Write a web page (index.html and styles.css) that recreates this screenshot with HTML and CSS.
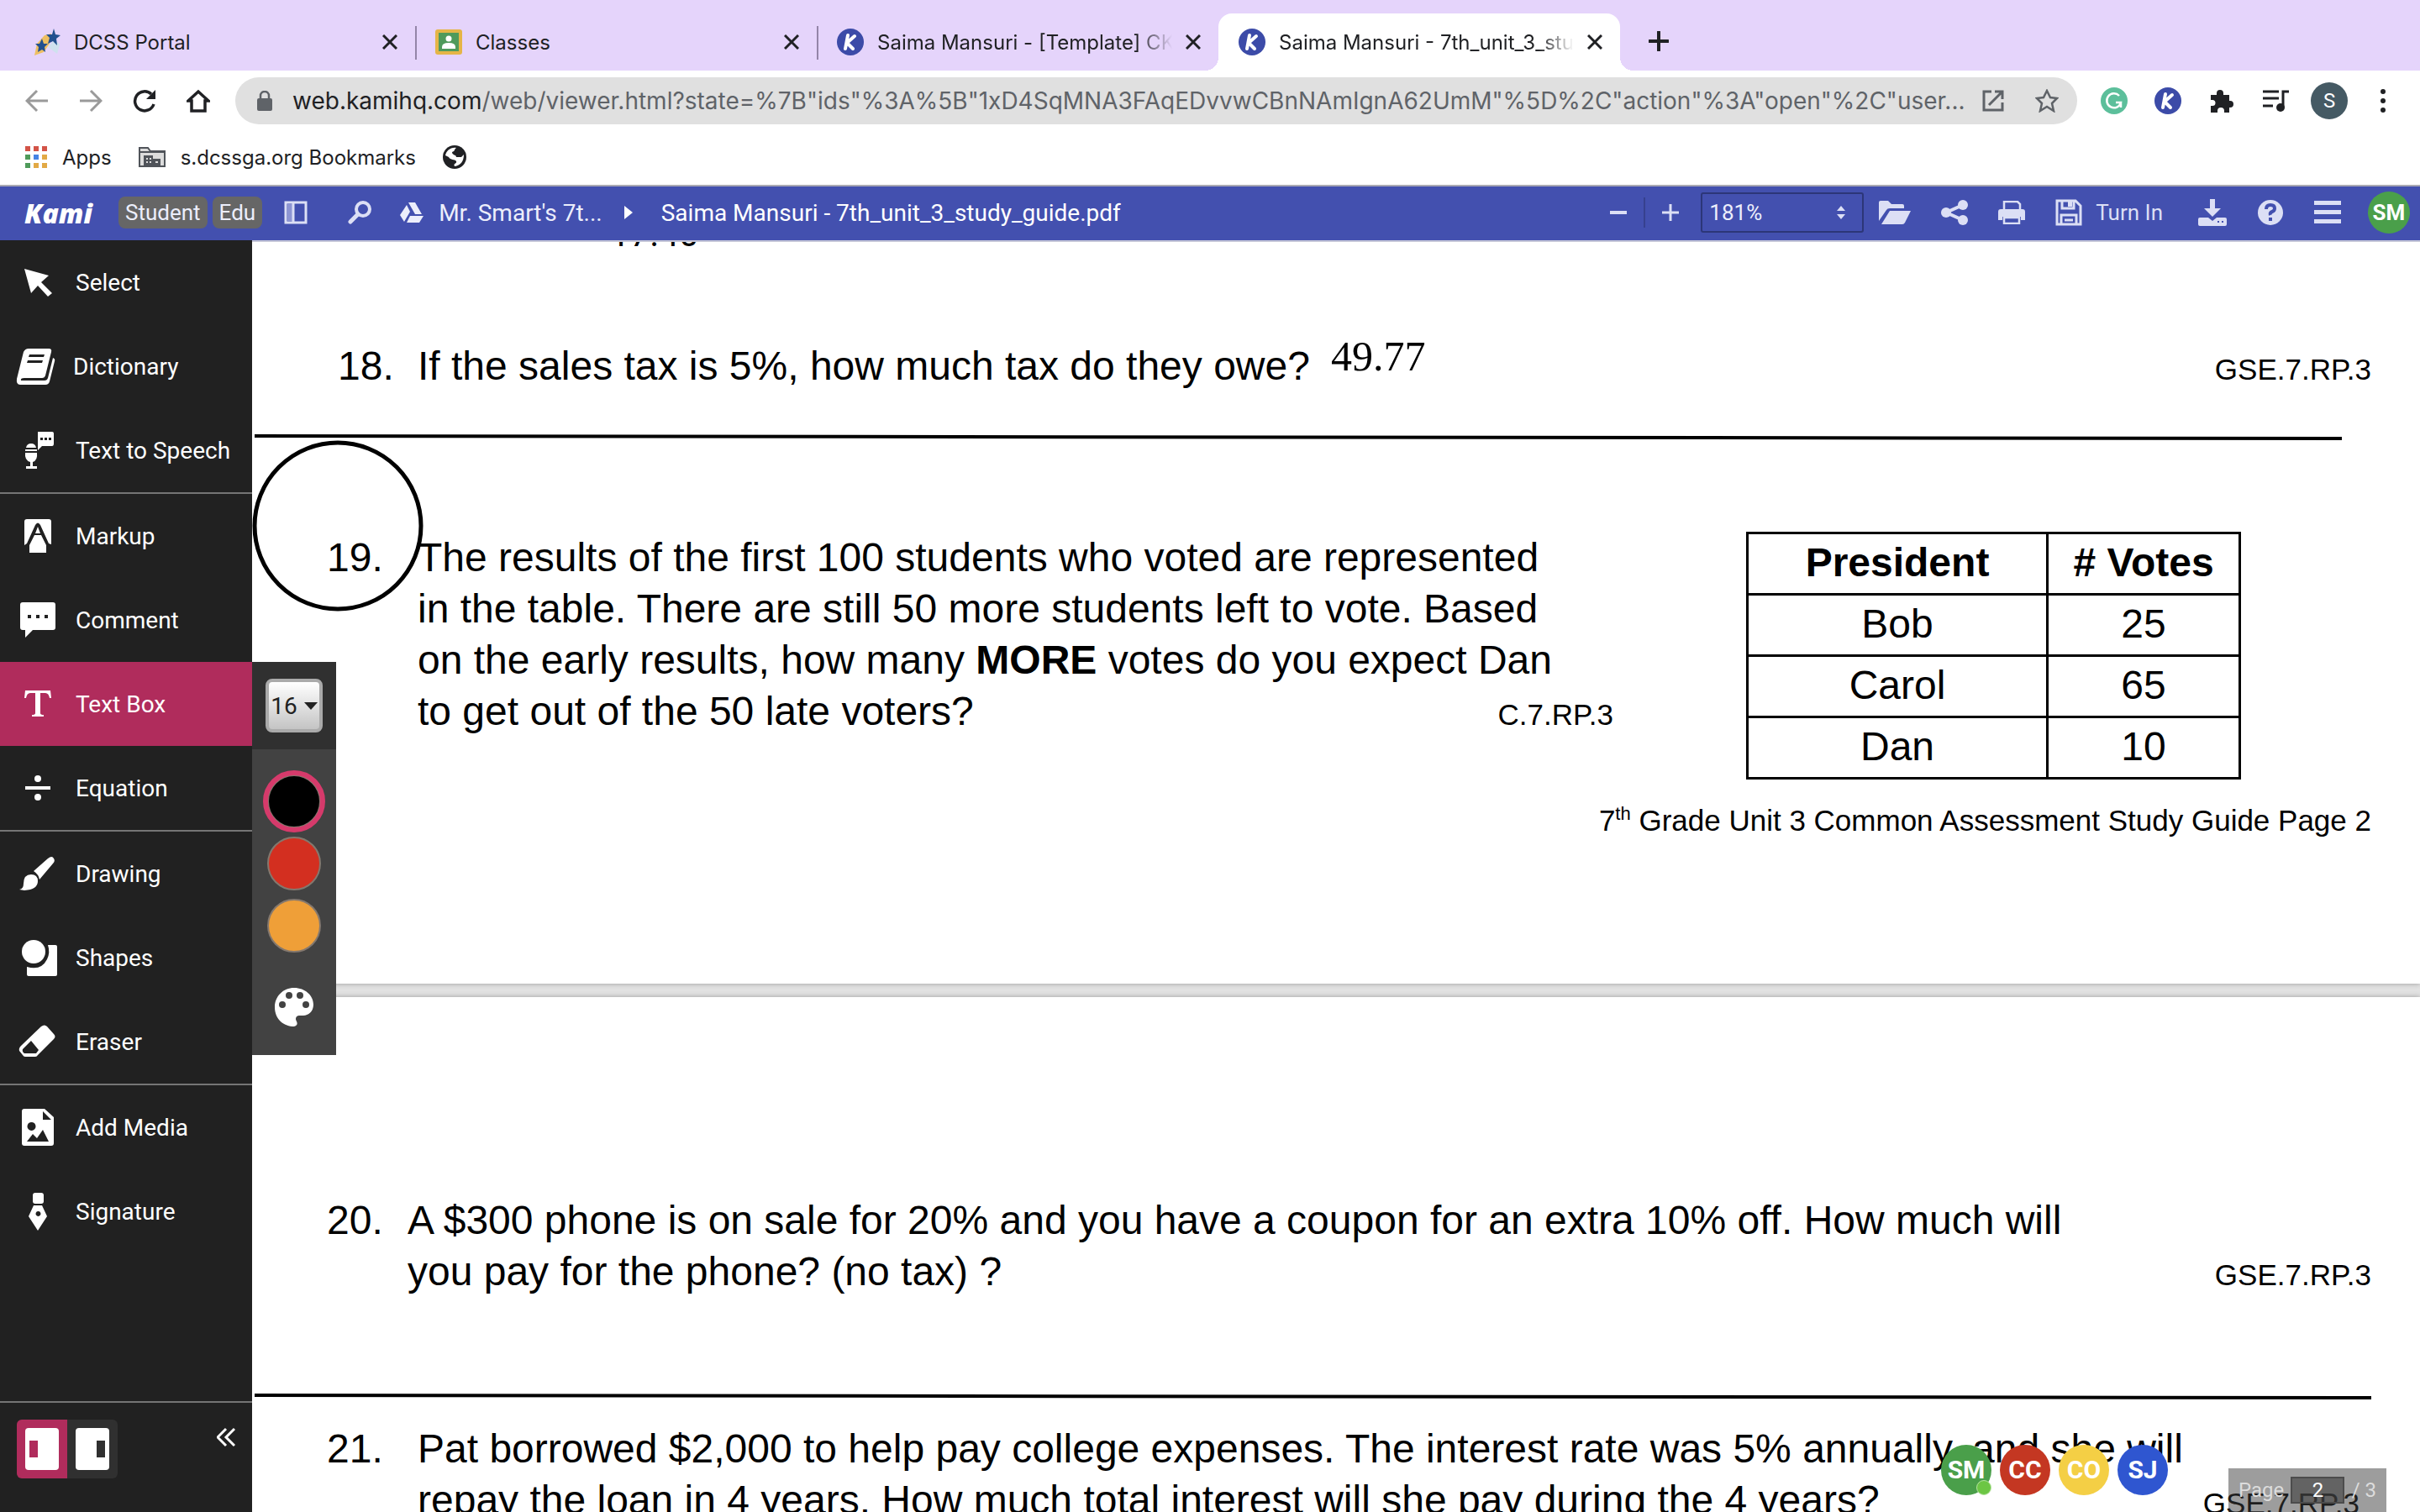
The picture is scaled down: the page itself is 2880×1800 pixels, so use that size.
FILE: index.html
```html
<!DOCTYPE html>
<html lang="en">
<head>
    <meta charset="utf-8">
    <title>Saima Mansuri - 7th_unit_3_study_guide.pdf</title>
    <link rel="stylesheet" href="styles.css">
</head>
<body>
    <!-- icons used more than once -->
    <svg class="defs" width="0" height="0">
        <symbol id="close" viewBox="0 0 18 18"><path d="M1 1l16 16M17 1L1 17" stroke="#202124" stroke-width="3" fill="none"/></symbol>
        <symbol id="kami" viewBox="0 0 32 32"><circle cx="16" cy="16" r="16" fill="#3c4ba8" stroke="none"/><path d="M13 8l-3 16M21 9l-9 8 7 7" stroke="#fff" stroke-width="4" stroke-linecap="round" stroke-linejoin="round" fill="none"/></symbol>
    </svg>

    <div class="tabs">
        <div class="tab">
            <svg class="favicon" viewBox="0 0 32 32"><path d="M1 32l3-14 9-10 8-2-2 12-7 10z" fill="#eebf62"/><path d="M17 22l8-9 6 6-3 11z" fill="#cfe2ee"/><path d="M24 0l2 7 6 1-5 4 1 8-5-5-6 3 2-7-4-4h7zM10 12l2 6 5 0-4 4 1 6-4-3-5 3 1-6-4-4h5z" fill="#22508f"/></svg>
            <span class="tab-title">DCSS Portal</span>
            <button class="close" aria-label="Close"><svg><use href="#close"/></svg></button>
        </div>
        <div class="tab line">
            <svg class="favicon" viewBox="0 0 32 32"><rect y="1" width="32" height="30" rx="3" fill="#e5b547"/><rect x="4" y="5" width="24" height="22" fill="#4f9a5b"/><circle cx="16" cy="12" r="3.500" fill="#fff"/><path d="M8 22q0-5 8-5t8 5v2H8z" fill="#fff"/></svg>
            <span class="tab-title">Classes</span>
            <button class="close" aria-label="Close"><svg><use href="#close"/></svg></button>
        </div>
        <div class="tab line">
            <svg class="favicon"><use href="#kami"/></svg>
            <span class="tab-title fade">Saima Mansuri - [Template] CKLA</span>
            <button class="close" aria-label="Close"><svg><use href="#close"/></svg></button>
        </div>
        <div class="tab active">
            <svg class="favicon"><use href="#kami"/></svg>
            <span class="tab-title fade">Saima Mansuri - 7th_unit_3_study</span>
            <button class="close" aria-label="Close"><svg><use href="#close"/></svg></button>
        </div>
        <button class="new-tab" aria-label="New tab"><svg width="24" height="24" viewBox="0 0 24 24"><path d="M12 1v22M1 12h22" stroke="#202124" stroke-width="4" stroke-linecap="round"/></svg></button>
    </div>

    <div class="toolbar">
        <button aria-label="Back"><svg viewBox="0 0 28 28"><path d="M27 14H3M14 2L2 14l12 12" stroke="#9a9a9a"/></svg></button>
        <button aria-label="Forward"><svg viewBox="0 0 28 28"><path d="M1 14h24M14 2l12 12-12 12" stroke="#9a9a9a"/></svg></button>
        <button aria-label="Reload"><svg viewBox="0 0 28 28"><path d="M25 18A11.500 11.500 0 1 1 22 6" stroke-width="3.500"/><path d="M27 1v11H16z" fill="#202124" stroke="none"/></svg></button>
        <button aria-label="Home"><svg viewBox="0 0 28 28"><path d="M14 3L2 14h4v12h16V14h4z" stroke-width="3.500"/></svg></button>
        <div class="omnibox">
            <svg class="lock" viewBox="0 0 18 24"><rect y="9" width="18" height="15" rx="2" fill="#5f6368"/><path d="M4 10V6a5 5 0 0 1 10 0v4" stroke="#5f6368" stroke-width="2.500" fill="none"/></svg>
            <div class="url"><b>web.kamihq.com</b>/web/viewer.html?state=%7B"ids"%3A%5B"1xD4SqMNA3FAqEDvvwCBnNAmIgnA62UmM"%5D%2C"action"%3A"open"%2C"user...</div>
            <button aria-label="Open in app"><svg viewBox="0 0 28 28"><path d="M12 3H3v22h22v-9M16 3h9v9M25 3L9 19" stroke="#5f6368"/></svg></button>
            <button aria-label="Bookmark"><svg viewBox="0 0 28 28"><path d="M14 2l4 8 8 1-6 6 2 9-8-5-8 5 2-9-6-6 8-1z" stroke="#5f6368" stroke-width="2.500"/></svg></button>
        </div>
        <button aria-label="Grammarly"><svg class="ext" viewBox="0 0 32 32"><circle cx="16" cy="16" r="16" fill="#5cbf9b" stroke="none"/><path d="M22 10a8.500 8.500 0 1 0 2 8h-6M24 18v6" stroke="#fff" stroke-width="2.500"/></svg></button>
        <button aria-label="Kami"><svg class="ext"><use href="#kami"/></svg></button>
        <button aria-label="Extensions"><svg viewBox="0 0 28 28"><path d="M1 7h7V5a4 4 0 0 1 8 0v2h7v7h1a4 4 0 0 1 0 8h-1v6h-6v-2a4 4 0 0 0-8 0v2H1v-8h2a3 3 0 0 0 0-7H1z" fill="#202124" stroke="none"/></svg></button>
        <button aria-label="Media"><svg class="ext" viewBox="0 0 32 28"><path d="M1 3h19M1 11h19M1 20h12M25 22V3h7"/><circle cx="22" cy="22" r="5" fill="#202124" stroke="none"/></svg></button>
        <button class="profile">S</button>
        <button aria-label="Menu"><svg viewBox="0 0 28 28"><g fill="#202124" stroke="none"><circle cx="14" cy="3" r="3"/><circle cx="14" cy="14" r="3"/><circle cx="14" cy="25" r="3"/></g></svg></button>
    </div>

    <div class="bookmarks">
        <a href="#"><svg width="26" height="26" viewBox="0 0 26 26"><g fill="#d35347"><path d="M0 0h6v6H0zM10 0h6v6h-6zM20 0h6v6h-6z"/></g><g fill="#4f9b5a"><path d="M0 10h6v6H0zM0 20h6v6H0z"/></g><path d="M10 10h6v6h-6z" fill="#4584e4"/><path d="M20 10h6v6h-6zM10 20h6v6h-6zM20 20h6v6h-6z" fill="#e2a945"/></svg>Apps</a>
        <a href="#"><svg width="32" height="26" viewBox="0 0 32 26"><path d="M1 24V2h10l3 4h17v18z" fill="#dcdcdc" stroke="#50545a" stroke-width="2"/><path d="M1 7h30" stroke="#50545a" stroke-width="2"/><path d="M6 11h11v4h9v9H6zM9 14v2h2v-2zM13 14v2h2v-2zM9 18v2h2v-2zM13 18v2h2v-2zM20 18v2h3v-2z" fill="#50545a" fill-rule="evenodd"/></svg>s.dcssga.org Bookmarks</a>
        <a href="#" aria-label="Globe"><svg width="28" height="28" viewBox="0 0 28 28"><circle cx="14" cy="14" r="14" fill="#202124"/><path d="M16 3c-3 2-1 4-5 5 0 4 5 3 5 6h6l3-3c0 8-4 13-11 14-2-4 3-3 2-6-2-3-7-1-9-5L3 12C4 7 9 2 16 3z" fill="#fff"/></svg></a>
    </div>

    <div class="kami-bar">
        <a class="logo" href="#">Kami</a>
        <span class="badge">Student</span>
        <span class="badge">Edu</span>
        <button class="panel" aria-label="Panel"><svg width="28" height="28" viewBox="0 0 28 28"><path d="M4 4h6v20H4z" fill="#8d95d3"/><path d="M2 2h24v24H2zM11 2v24" fill="none" stroke="#dcdff5" stroke-width="3"/></svg></button>
        <button class="search" aria-label="Search"><svg width="28" height="28" viewBox="0 0 28 28"><circle cx="18" cy="10" r="8" fill="none" stroke="#dcdff5" stroke-width="4"/><path d="M12 16L3 25" stroke="#dcdff5" stroke-width="5" stroke-linecap="round"/></svg></button>
        <a class="crumb" href="#"><svg width="28" height="26" viewBox="0 0 28 26"><path d="M10 1h8l8 14h-8zM8 4l4 8-7 12-5-8zM12 17h16l-5 8H8z" fill="#eceefb"/></svg>Mr. Smart's 7t...</a>
        <svg class="arrow" width="10" height="16" viewBox="0 0 10 16"><path d="M0 0l10 8-10 8z" fill="#fff"/></svg>
        <span class="file">Saima Mansuri - 7th_unit_3_study_guide.pdf</span>

        <div class="zoom">
            <button aria-label="Zoom out"><svg width="20" height="20" viewBox="0 0 20 20"><path d="M0 10h20" stroke="#dcdff5" stroke-width="4"/></svg></button>
            <i></i>
            <button aria-label="Zoom in"><svg width="20" height="20" viewBox="0 0 20 20"><path d="M0 10h20M10 0v20" stroke="#dcdff5" stroke-width="3"/></svg></button>
            <div class="select">
                <select aria-label="Zoom level"><option>181%</option></select>
                <svg width="10" height="16" viewBox="0 0 10 16"><path d="M0 6l5-6 5 6zM0 10l5 6 5-6z" fill="#dcdff5"/></svg>
            </div>
        </div>
        <div class="actions">
            <button aria-label="Open"><svg width="38" height="28" viewBox="0 0 38 28"><path d="M0 2q0-2 2-2h9l4 4h13q2 0 2 2v3H13q-3 0-4 2L0 24z"/><path d="M13 12h25l-7 14q-1 2-3 2H3z"/></svg></button>
            <button aria-label="Share"><svg width="32" height="30" viewBox="0 0 32 30"><circle cx="26" cy="6" r="6"/><circle cx="6" cy="15" r="6"/><circle cx="26" cy="24" r="6"/><path d="M26 6L6 15l20 9" fill="none" stroke="#dcdff5" stroke-width="4"/></svg></button>
            <button aria-label="Print"><svg width="32" height="28" viewBox="0 0 32 28"><path d="M7 10V1h16l3 3v6M7 20h18v7H7z" fill="none" stroke="#dcdff5" stroke-width="2.500"/><path d="M3 10h26q3 0 3 3v10h-5v-4H5v4H0V13q0-3 3-3z"/></svg></button>
            <button class="turn-in"><svg width="32" height="32" viewBox="0 0 32 32"><path d="M2 2h22l6 6v22H2zM8 2v9h14V2M7 30V19h18v11M11 25h10" fill="none" stroke="#dcdff5" stroke-width="3"/><path d="M15 3h5v6h-5z"/></svg>Turn In</button>
            <button aria-label="Download"><svg width="34" height="32" viewBox="0 0 34 32"><path d="M14 0h6v11h7L17 21 7 11h7z"/><path d="M2 22h10l5 4 5-4h10q2 0 2 2v6q0 2-2 2H2q-2 0-2-2v-6q0-2 2-2z"/><path d="M23 27h2M28 27h2" stroke="#4350af" stroke-width="2"/></svg></button>
            <button aria-label="Help"><svg width="32" height="32" viewBox="0 0 32 32"><circle cx="16" cy="16" r="15"/><path d="M11 12q0-5 5-5t5 4q0 3-3 4t-2 4M16 22v4" fill="none" stroke="#4350af" stroke-width="4"/></svg></button>
            <button aria-label="Menu"><svg width="32" height="28" viewBox="0 0 32 28"><path d="M0 0h32v5H0zM0 11h32v5H0zM0 22h32v5H0z"/></svg></button>
            <button class="me">SM</button>
        </div>
    </div>

    <div class="main">
        <div class="sidebar">
            <button class="tool"><svg viewBox="0 0 44 44"><path d="M6 6l29 8-9 8 13 13-5 4-12-13-8 9z"/></svg>Select</button>
            <button class="tool dictionary"><svg viewBox="0 0 44 44"><path d="M14 1h24q4 0 3 4l-7 28q-1 3-4 3H9q-5 0-4 3h28q3 0 4-3l6-24q3 1 2 4l-6 24q-1 4-5 4H4q-5 0-4-7L8 5q2-4 6-4zM15 8l-1 3h18l1-3zM13 15l-1 3h18l1-3z" fill-rule="evenodd"/></svg>Dictionary</button>
            <button class="tool"><svg viewBox="0 0 44 44"><path d="M22 0h17q2 0 2 2v12q0 3-2 3H27l-5 5zM25 7v3h3V7zM30 7v3h3V7zM35 7v3h3V7z" fill-rule="evenodd"/><path d="M8 19q1-5 6-5t6 5zM7 21h14v2H7zM7 25h14q1 9-5 11v5h5v3H8v-3h5v-5q-7-2-6-11z"/></svg>Text to Speech</button>
            <hr>
            <button class="tool"><svg viewBox="0 0 44 44"><path d="M9 2h26q3 0 3 3v27l-3-1L25 9q-3-5-6 0L9 31l-3 2V5q0-3 3-3z"/><path d="M18 21h8l6 12v9H12v-9zM22 11l3 8h-6z"/></svg>Markup</button>
            <button class="tool"><svg viewBox="0 0 44 44"><path d="M4 1h36q3 0 3 3v27q0 3-3 3H16l-9 9v-9H4q-3 0-3-3V4q0-3 3-3zM10 16v4h4v-4zM20 16v4h4v-4zM30 16v4h4v-4z" fill-rule="evenodd"/></svg>Comment</button>
            <button class="tool selected"><svg viewBox="0 0 44 44"><path d="M7 6h30l1 9h-2q-1-6-5-6h-6v24q0 2 4 2v2H15v-2q4 0 4-2V9h-6q-4 0-5 6H6z"/></svg>Text Box</button>
            <button class="tool"><svg viewBox="0 0 44 44"><path d="M7 20h30v4H7z"/><circle cx="22" cy="11" r="4"/><circle cx="22" cy="33" r="4"/></svg>Equation</button>
            <hr>
            <button class="tool"><svg viewBox="0 0 44 44"><path d="M17 19L34 4q5-4 7 0 2 3-1 6L24 29q-1-6-7-10z"/><path d="M14 23q8 0 8 8 0 10-16 11l-6-1q5-1 5-7 0-11 9-11z"/></svg>Drawing</button>
            <button class="tool"><svg viewBox="0 0 44 44"><circle cx="17" cy="15" r="14"/><path d="M34 7h9q2 0 2 2v33q0 2-2 2H11q-2 0-2-2v-9q17 5 24-9 4-8 1-17z"/></svg>Shapes</button>
            <button class="tool"><svg viewBox="0 0 44 44"><path d="M2 27L26 4q4-3 7 0l8 9q3 3 0 6L22 38q-1 2-3 2H7q-2 0-3-2l-4-5q-1-3 2-6zM14 21L4 31q-1 3 2 5h14l3-4z" fill-rule="evenodd"/></svg>Eraser</button>
            <hr>
            <button class="tool"><svg viewBox="0 0 44 44"><path d="M6 0h24l11 10v31q0 3-3 3H6q-3 0-3-3V3q0-3 3-3zM28 3v10h10zM14 16a5 5 0 1 0 1 0zM9 39h26l-7-14-7 10-5-5z" fill-rule="evenodd"/></svg>Add Media</button>
            <button class="tool"><svg viewBox="0 0 44 44"><rect x="16" y="0" width="13" height="13" rx="3"/><path d="M17 15h10l6 13-11 17-11-17zM22 22a3 3 0 1 0 1 0z" fill-rule="evenodd"/></svg>Signature</button>

            <div class="sidebar-foot">
                <div class="dock">
                    <button class="on" aria-label="Dock left"><svg width="40" height="50" viewBox="0 0 40 50"><rect width="40" height="50" rx="4" fill="#fff"/><path d="M5 15h10v20H5z" fill="#b02c5c"/></svg></button>
                    <button aria-label="Dock right"><svg width="40" height="50" viewBox="0 0 40 50"><rect width="40" height="50" rx="4" fill="#fff"/><path d="M25 15h10v20H25z" fill="#303030"/></svg></button>
                </div>
                <button aria-label="Collapse"><svg width="22" height="24" viewBox="0 0 22 24"><path d="M11 2L1 12l10 10M21 2L11 12l10 10" fill="none" stroke="#fff" stroke-width="3"/></svg></button>
            </div>
        </div>

        <div class="viewer">
            <div class="page page-2">
                <span class="note note-17">17.40</span>
                <div class="question q18">
                    <span class="number">18.</span>
                    <p>If the sales tax is 5%, how much tax do they owe?</p>
                    <span class="note note-18">49.77</span>
                    <span class="standard">GSE.7.RP.3</span>
                </div>
                <svg class="rule short"><line x1="0" y1="2" x2="100%" y2="5"/></svg>
                <div class="question q19">
                    <span class="number">19.</span>
                    <div class="q19-text">
                        <p>The results of the first 100 students who voted are represented<br>
                        in the table. There are still 50 more students left to vote. Based<br>
                        on the early results, how many <b>MORE</b> votes do you expect Dan</p>
                        <p class="last">to get out of the 50 late voters? <span class="standard">C.7.RP.3</span></p>
                    </div>
                    <table>
                        <tr><th>President</th><th># Votes</th></tr>
                        <tr><td>Bob</td><td>25</td></tr>
                        <tr><td>Carol</td><td>65</td></tr>
                        <tr><td>Dan</td><td>10</td></tr>
                    </table>
                </div>
                <p class="footer">7<sup>th</sup> Grade Unit 3 Common Assessment Study Guide Page 2</p>
                <svg class="circle" viewBox="0 0 204 204"><circle cx="102" cy="102" r="99"/></svg>
            </div>

            <div class="page page-3">
                <div class="question q20">
                    <span class="number">20.</span>
                    <p>A $300 phone is on sale for 20% and you have a coupon for an extra 10% off. How much will<br>you pay for the phone? (no tax) ?</p>
                    <span class="standard">GSE.7.RP.3</span>
                </div>
                <svg class="rule"><line x1="0" y1="2" x2="100%" y2="5"/></svg>
                <div class="question q21">
                    <span class="number">21.</span>
                    <p>Pat borrowed $2,000 to help pay college expenses. The interest rate was 5% annually, and she will<br>repay the loan in 4 years. How much total interest will she pay during the 4 years?</p>
                    <span class="standard">GSE.7.RP.3</span>
                </div>
            </div>

            <!-- text box options -->
            <div class="options">
                <div class="size"><button>16<svg width="16" height="9" viewBox="0 0 16 9"><path d="M0 0h16L8 9z" fill="#222"/></svg></button></div>
                <button class="swatch black picked" aria-label="Black"></button>
                <button class="swatch red" aria-label="Red"></button>
                <button class="swatch orange" aria-label="Orange"></button>
                <button class="palette" aria-label="More colors"><svg width="46" height="46" viewBox="0 0 46 46"><path d="M23 0c13 0 23 9 23 20 0 8-6 13-12 13h-5c-4 0-5 4-3 7 2 4-1 6-5 6C9 45 0 36 0 23S10 0 23 0z" fill="#fff"/><g fill="#424242"><circle cx="9" cy="20" r="4"/><circle cx="17" cy="9" r="4"/><circle cx="30" cy="9" r="4"/><circle cx="37" cy="20" r="4"/></g></svg></button>
            </div>

            <div class="people">
                <span class="green online">SM</span>
                <span class="crimson">CC</span>
                <span class="yellow">CO</span>
                <span class="blue">SJ</span>
            </div>
            <div class="pager"><label for="page">Page</label><input id="page" value="2"><span>/ 3</span></div>
        </div>
    </div>
</body>
</html>
```
FILE: styles.css
```css
* {
    box-sizing: border-box;
}
body {
    margin: 0;
    height: 100vh;
    display: flex;
    flex-direction: column;
    overflow: hidden;
    background: #fff;
    color: #202124;
    font-family: Roboto, sans-serif;
    font-size: 28px;
}
button {
    border: none;
    background: none;
    padding: 0;
    margin: 0;
    font: inherit;
    color: inherit;
    display: flex;
    align-items: center;
    justify-content: center;
    flex-shrink: 0;
}
a {
    color: inherit;
    text-decoration: none;
}
svg {
    display: block;
    flex-shrink: 0;
}
p {
    margin: 0;
}
.defs {
    position: absolute;
}

/* browser tabs */
.tabs {
    height: 84px;
    background: #e5d4fb;
    padding: 16px 16px 0;
    display: flex;
    flex-shrink: 0;
    font-family: Inter, sans-serif;
    font-size: 24px;
}
.tab {
    position: relative;
    width: 478px;
    padding: 0 21px 0 24px;
    display: flex;
    align-items: center;
    gap: 16px;
}
.tab.line::before {
    content: "";
    position: absolute;
    left: 0;
    top: 15px;
    width: 2px;
    height: 40px;
    background: #9485a8;
}
.tab.active {
    background: #fff;
    border-radius: 16px 16px 0 0;
}
.tab.active::before, .tab.active::after {
    content: "";
    position: absolute;
    bottom: 0;
    width: 16px;
    height: 16px;
}
.tab.active::before {
    left: -16px;
    background: radial-gradient(circle at 0 0, transparent 16px, #fff 16px);
}
.tab.active::after {
    right: -16px;
    background: radial-gradient(circle at 100% 0, transparent 16px, #fff 16px);
}
.favicon {
    width: 32px;
    height: 32px;
}
.tab-title {
    flex: 1;
    white-space: nowrap;
    overflow: hidden;
}
.fade {
    -webkit-mask-image: linear-gradient(to right, #000 88%, transparent);
    mask-image: linear-gradient(to right, #000 88%, transparent);
}
.close svg {
    width: 18px;
    height: 18px;
}
.new-tab {
    width: 64px;
    margin-left: 14px;
    padding-bottom: 2px;
}

/* address bar */
.toolbar {
    height: 72px;
    padding: 0 12px;
    display: flex;
    align-items: center;
    flex-shrink: 0;
}
.toolbar button {
    width: 64px;
    height: 56px;
}
.toolbar svg {
    width: 28px;
    height: 28px;
    fill: none;
    stroke: #202124;
    stroke-width: 3;
}
.toolbar .ext {
    width: 32px;
    height: 32px;
}
.omnibox {
    flex: 1;
    min-width: 0;
    height: 56px;
    margin: 0 12px;
    padding: 0 4px 0 26px;
    display: flex;
    align-items: center;
    background: #e0e0e0;
    border-radius: 28px;
}
.omnibox .lock {
    width: 18px;
    height: 24px;
    margin-right: 24px;
    stroke: none;
}
.url {
    flex: 1;
    overflow: hidden;
    white-space: nowrap;
    color: #5f6368;
    font-family: Inter, sans-serif;
    font-size: 28px;
}
.url b {
    font-weight: normal;
    color: #202124;
}
.toolbar .profile {
    width: 44px;
    height: 44px;
    margin: 0 10px;
    border-radius: 50%;
    background: #455a64;
    color: #fff;
    font-size: 24px;
}

/* bookmarks */
.bookmarks {
    height: 66px;
    padding: 0 30px 2px;
    display: flex;
    align-items: center;
    gap: 32px;
    flex-shrink: 0;
    border-bottom: 2px solid #a9a9b3;
    font-family: Inter, sans-serif;
    font-size: 24px;
}
.bookmarks a {
    display: flex;
    align-items: center;
    gap: 18px;
}

/* kami header */
.kami-bar {
    height: 64px;
    padding: 0 12px 2px 29px;
    display: flex;
    align-items: center;
    flex-shrink: 0;
    background: #4350af;
    color: #eceefb;
}
.logo {
    width: 112px;
    font-family: "Open Sans", sans-serif;
    font-size: 32px;
    font-weight: 800;
    font-style: italic;
    color: #fff;
}
.badge {
    height: 38px;
    line-height: 38px;
    padding: 0 8px;
    margin-right: 6px;
    border-radius: 8px;
    background: #666;
    font-size: 26px;
}
.panel {
    margin-left: 20px;
}
.search {
    margin: 0 34px 0 48px;
}
.crumb {
    display: flex;
    align-items: center;
    gap: 18px;
}
.arrow {
    margin: 0 34px 0 26px;
}
.file {
    color: #fff;
    white-space: nowrap;
}
.zoom {
    margin-left: auto;
    display: flex;
    align-items: center;
}
.zoom i {
    width: 2px;
    height: 36px;
    margin: 0 20px;
    background: #36418f;
}
.select {
    position: relative;
    margin-left: 26px;
}
.select select {
    appearance: none;
    width: 194px;
    height: 48px;
    padding: 0 8px;
    border: 2px solid #2c3678;
    border-radius: 3px;
    background: transparent;
    color: #eceefb;
    font: inherit;
    font-size: 26px;
}
.select svg {
    position: absolute;
    right: 22px;
    top: 16px;
}
.actions {
    display: flex;
    align-items: center;
    gap: 36px;
    margin-left: 18px;
    fill: #dcdff5;
    color: #dcdff5;
    font-size: 26px;
}
.turn-in {
    gap: 16px;
    margin-right: 6px;
}
.me {
    width: 50px;
    height: 50px;
    margin-left: -4px;
    border-radius: 50%;
    background: #4a9f4a;
    color: #fff;
    font-weight: bold;
}

/* tool list */
.main {
    flex: 1;
    min-height: 0;
    display: flex;
}
.sidebar {
    width: 300px;
    flex-shrink: 0;
    display: flex;
    flex-direction: column;
    background: #212121;
    color: #fff;
    fill: #fff;
}
.sidebar hr {
    width: 100%;
    margin: 0;
    border: none;
    border-top: 2px solid #757575;
}
.tool {
    height: 100px;
    padding: 0 24px 0 23px;
    justify-content: flex-start;
    gap: 23px;
    white-space: nowrap;
}
.tool svg {
    width: 44px;
    height: 44px;
    overflow: visible;
}
.dictionary {
    padding-left: 20px;
}
.tool.selected {
    background: #b02c5c;
}
.sidebar-foot {
    height: 132px;
    margin-top: auto;
    padding: 20px;
    display: flex;
    align-items: flex-start;
    justify-content: space-between;
    border-top: 2px solid #757575;
}
.sidebar-foot > button {
    margin-top: 9px;
}
.dock {
    display: flex;
    border-radius: 6px;
    overflow: hidden;
    background: #303030;
}
.dock button {
    width: 60px;
    height: 70px;
}
.dock .on {
    background: #b02c5c;
}

/* document */
.viewer {
    position: relative;
    flex: 1;
    min-width: 0;
    overflow: hidden;
    border-top: 2px solid #c5c6d8;
    background: #e2e2e2;
    color: #000;
    font-family: "Liberation Sans", Arial, sans-serif;
    font-size: 48px;
    line-height: 61px;
}
.page {
    position: relative;
    padding: 0 58px 0 89px;
    background: #fff;
    box-shadow: 0 0 6px #999;
}
.page-2 {
    padding-top: 117px;
    padding-bottom: 174px;
    margin-bottom: 16px;
}
.page-3 {
    padding-top: 235px;
    padding-bottom: 400px;
}
.question {
    display: flex;
    align-items: last baseline;
    white-space: nowrap;
}
.question .number {
    width: 108px;
    flex-shrink: 0;
    align-self: flex-start;
}
.standard {
    margin-left: auto;
    font-size: 35px;
    line-height: 40px;
}
.rule {
    width: calc(100% + 86px);
    height: 8px;
    margin-left: -86px;
}
.rule.short {
    width: calc(100% + 51px);
}
.rule line {
    stroke: #000;
    stroke-width: 4;
}
.q18 {
    padding-left: 13px;
}
.q18 .number {
    width: 95px;
}
.q18 + .rule {
    margin-top: 51px;
}
.question.q19 {
    align-items: flex-start;
    margin-top: 108px;
}
.q19-text {
    width: 1423px;
}
.last {
    display: flex;
    align-items: baseline;
    justify-content: space-between;
}
.q19 table {
    width: 589px;
    margin-left: 158px;
    border-collapse: collapse;
    text-align: center;
}
.q19 th, .q19 td {
    height: 73px;
    padding: 0 0 3px;
    border: 3px solid #000;
}
.q19 th:first-child {
    width: 357px;
}
.footer {
    margin-top: 29px;
    font-size: 35px;
    line-height: 40px;
    text-align: right;
}
.footer sup {
    font-size: 22px;
    line-height: 0;
}
.q20 .number {
    width: 96px;
}
.q20 + .rule {
    margin-top: 115px;
}
.q21 {
    margin-top: 27px;
    margin-right: 14px;
}

/* student annotations */
.note {
    position: absolute;
}
.note-17 {
    left: 426px;
    top: -40px;
    font-family: Roboto, sans-serif;
    font-size: 42px;
}
.note-18 {
    left: 1284px;
    top: 106px;
    font-family: "Liberation Serif", "Times New Roman", serif;
    font-size: 50px;
}
.circle {
    position: absolute;
    left: 0;
    top: 236px;
    width: 204px;
    height: 204px;
    fill: none;
    stroke: #000;
    stroke-width: 5;
}

/* text box options */
.options {
    position: absolute;
    left: 0;
    top: 500px;
    width: 100px;
    height: 468px;
    display: flex;
    flex-direction: column;
    align-items: center;
    gap: 10px;
    background: #424242;
    font-family: Roboto, sans-serif;
    font-size: 28px;
}
.size {
    width: 100%;
    height: 104px;
    margin-bottom: 20px;
    padding: 20px 16px;
    background: #303030;
}
.size button {
    width: 68px;
    height: 64px;
    gap: 8px;
    border: 4px solid #aaa;
    border-radius: 8px;
    background: linear-gradient(#fff, #c4c4c4);
    color: #222;
}
.swatch {
    width: 64px;
    height: 64px;
    border: 2px solid #84786e;
    border-radius: 50%;
}
.swatch.picked {
    outline: 6px solid #d63a6b;
    outline-offset: -1px;
}
.black {
    background: #000;
}
.red {
    background: #d32f20;
}
.orange {
    background: #ef9f38;
}
.palette {
    margin-top: 32px;
}

/* people on the file */
.people {
    position: absolute;
    right: 300px;
    bottom: 20px;
    display: flex;
    gap: 10px;
    color: #fff;
    font-family: Roboto, sans-serif;
    font-size: 30px;
    font-weight: bold;
    line-height: 60px;
    text-align: center;
}
.people span {
    position: relative;
    width: 60px;
    height: 60px;
    border-radius: 50%;
}
.online::after {
    content: "";
    position: absolute;
    right: 0;
    bottom: 0;
    width: 16px;
    height: 16px;
    border: 1px solid #b5e3a0;
    border-radius: 50%;
    background: #6cc644;
}
.green {
    background: #4a9f4a;
}
.crimson {
    background: #c43722;
}
.yellow {
    background: #f4cf45;
}
.blue {
    background: #2f56d0;
}
.pager {
    position: absolute;
    right: 40px;
    bottom: 0;
    width: 188px;
    height: 52px;
    padding: 0 12px;
    display: flex;
    align-items: center;
    justify-content: space-between;
    background: rgba(60, 60, 60, 0.5);
    color: #dcdcdc;
    font-family: Roboto, sans-serif;
    font-size: 24px;
}
.pager input {
    width: 64px;
    height: 32px;
    border: 2px solid #4c4c4c;
    background: rgba(60, 60, 60, 0.6);
    color: #fff;
    font: inherit;
    text-align: center;
}
```
